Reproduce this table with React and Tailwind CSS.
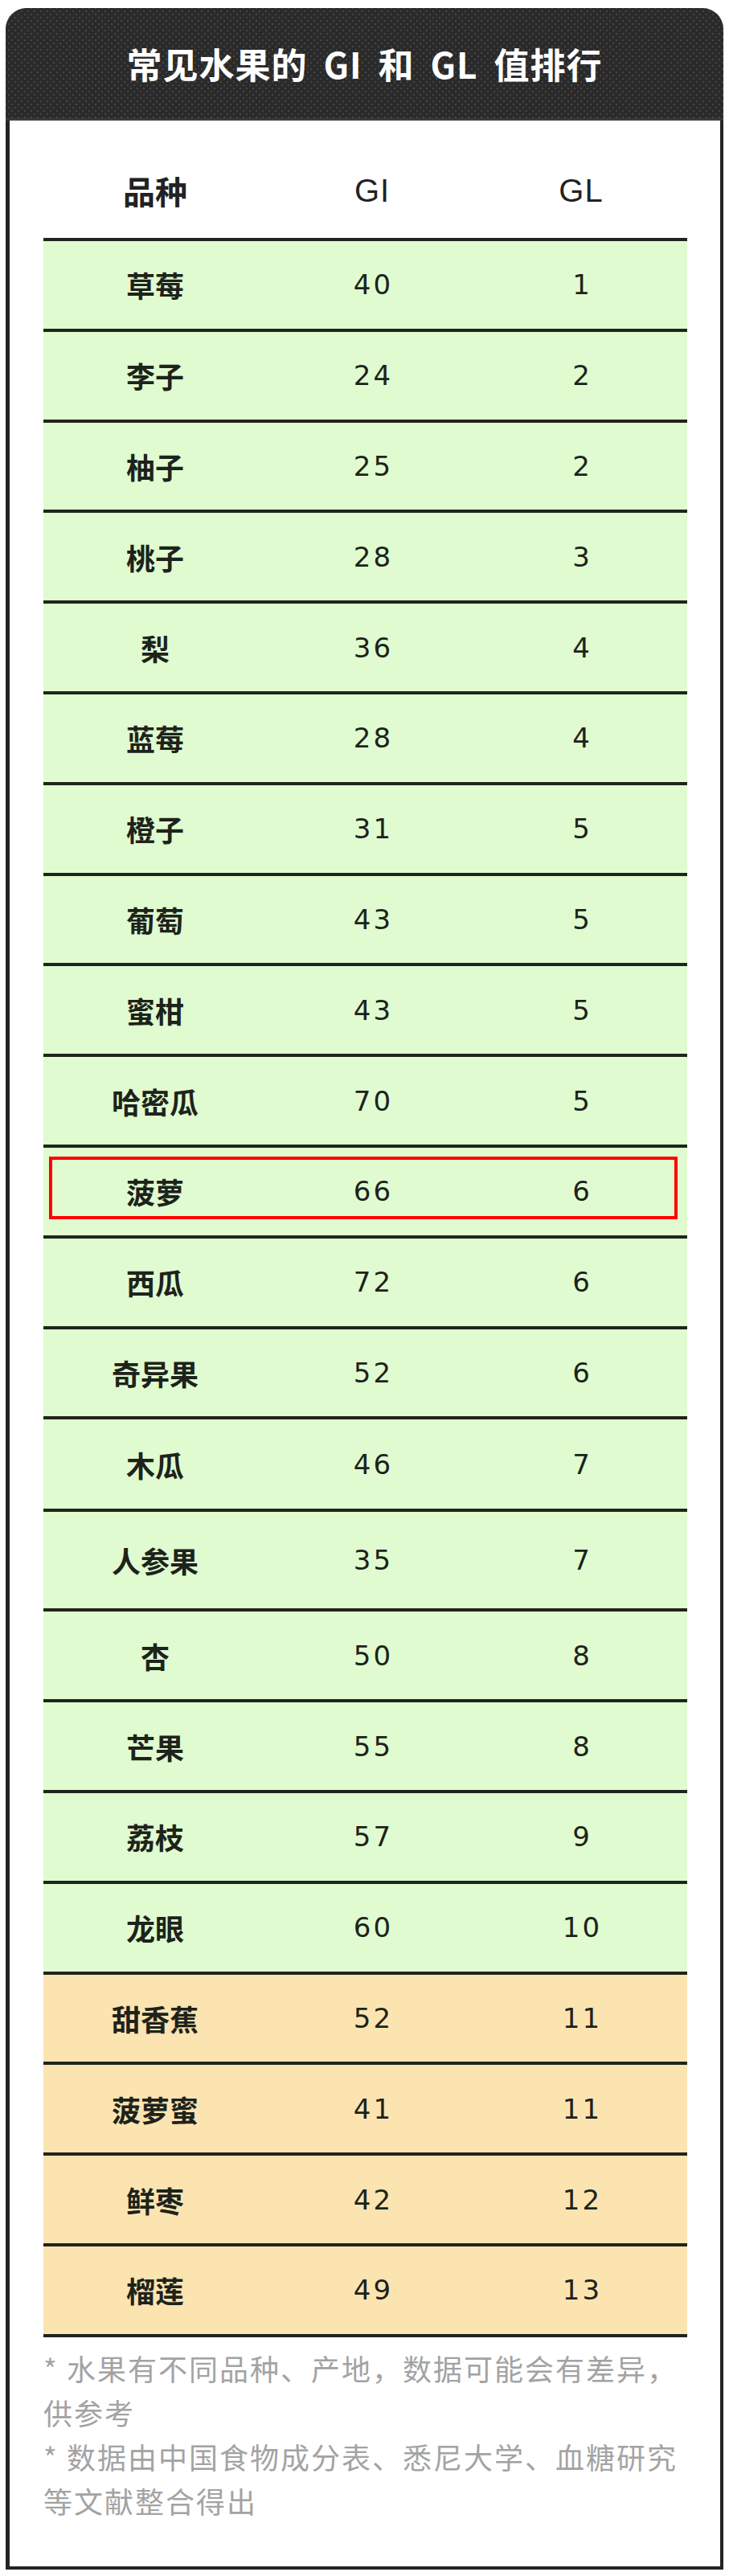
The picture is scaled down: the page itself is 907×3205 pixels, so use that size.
import React from "react";

const fruits = [
  { name: "草莓", gi: 40, gl: 1 },
  { name: "李子", gi: 24, gl: 2 },
  { name: "柚子", gi: 25, gl: 2 },
  { name: "桃子", gi: 28, gl: 3 },
  { name: "梨", gi: 36, gl: 4 },
  { name: "蓝莓", gi: 28, gl: 4 },
  { name: "橙子", gi: 31, gl: 5 },
  { name: "葡萄", gi: 43, gl: 5 },
  { name: "蜜柑", gi: 43, gl: 5 },
  { name: "哈密瓜", gi: 70, gl: 5 },
  { name: "菠萝", gi: 66, gl: 6, mark: true },
  { name: "西瓜", gi: 72, gl: 6 },
  { name: "奇异果", gi: 52, gl: 6 },
  { name: "木瓜", gi: 46, gl: 7, h: "h-[115px]" },
  { name: "人参果", gi: 35, gl: 7, h: "h-[124px]" },
  { name: "杏", gi: 50, gl: 8 },
  { name: "芒果", gi: 55, gl: 8 },
  { name: "荔枝", gi: 57, gl: 9 },
  { name: "龙眼", gi: 60, gl: 10 },
  { name: "甜香蕉", gi: 52, gl: 11, high: true },
  { name: "菠萝蜜", gi: 41, gl: 11, high: true },
  { name: "鲜枣", gi: 42, gl: 12, high: true },
  { name: "榴莲", gi: 49, gl: 13, high: true },
];

function Row({ fruit }) {
  return (
    <div
      className={`relative grid grid-cols-[278px_262px_258px] items-center text-center border-b-4 border-[#1f251d] ${
        fruit.h || "h-[112.8px]"
      } ${fruit.high ? "bg-[#fce4b1]" : "bg-[#e0fbd0]"}`}
    >
      <div className="font-['Noto_Sans_CJK_SC',sans-serif] font-bold text-[36px] leading-[40px] text-[#1d231b]">
        {fruit.name}
      </div>
      <div className="font-['DejaVu_Sans',sans-serif] text-[34px] leading-[40px] tracking-[3px] pl-[3px] text-[#1d231b]">
        {fruit.gi}
      </div>
      <div className="font-['DejaVu_Sans',sans-serif] text-[34px] leading-[40px] tracking-[3px] pl-[3px] text-[#1d231b]">
        {fruit.gl}
      </div>
      {fruit.mark && (
        <div className="absolute left-[7px] right-[12px] top-[11px] bottom-[20px] border-4 border-[#ff0000]" />
      )}
    </div>
  );
}

export default function App() {
  return (
    <div className="w-[907px] bg-white pt-[10px] pb-[8px] px-[7px]">
      {/* title bar */}
      <div className="h-[140px] rounded-t-[26px] bg-[#2a2a2a] bg-[radial-gradient(circle,#454545_1px,transparent_1.6px),radial-gradient(circle,#454545_1px,transparent_1.6px)] bg-[length:8px_8px] bg-[position:0_0,4px_4px] border-b-[3px] border-[#3a3a3a] flex items-center justify-center gap-[20px] text-white font-['Noto_Sans_CJK_SC',sans-serif] font-bold text-[44px] leading-[50px] tracking-[1px]">
        <span>常见水果的</span>
        <span>GI</span>
        <span>和</span>
        <span>GL</span>
        <span>值排行</span>
      </div>

      <div className="border-l-[5px] border-r-4 border-b-4 border-[#242424] pl-[42px] pr-[41px] pb-[54px]">
        {/* column titles */}
        <div className="h-[146px] grid grid-cols-[278px_262px_258px] items-end text-center pb-[39px] text-[#222]">
          <div className="font-['Noto_Sans_CJK_SC',sans-serif] font-bold text-[40px] leading-[40px]">
            品种
          </div>
          <div className="font-['Liberation_Sans',sans-serif] text-[40px] leading-[40px] tracking-[1px]">
            GI
          </div>
          <div className="font-['Liberation_Sans',sans-serif] text-[40px] leading-[40px] tracking-[1px]">
            GL
          </div>
        </div>

        <div className="border-t-4 border-[#1f251d]">
          {fruits.map((f) => (
            <Row key={f.name} fruit={f} />
          ))}
        </div>

        <div className="pt-[11px] font-['Noto_Sans_CJK_SC',sans-serif] text-[36px] leading-[55px] tracking-[2px] text-[#a3a3a3]">
          <p>* 水果有不同品种、产地，数据可能会有差异，供参考</p>
          <p>* 数据由中国食物成分表、悉尼大学、血糖研究等文献整合得出</p>
        </div>
      </div>
    </div>
  );
}
